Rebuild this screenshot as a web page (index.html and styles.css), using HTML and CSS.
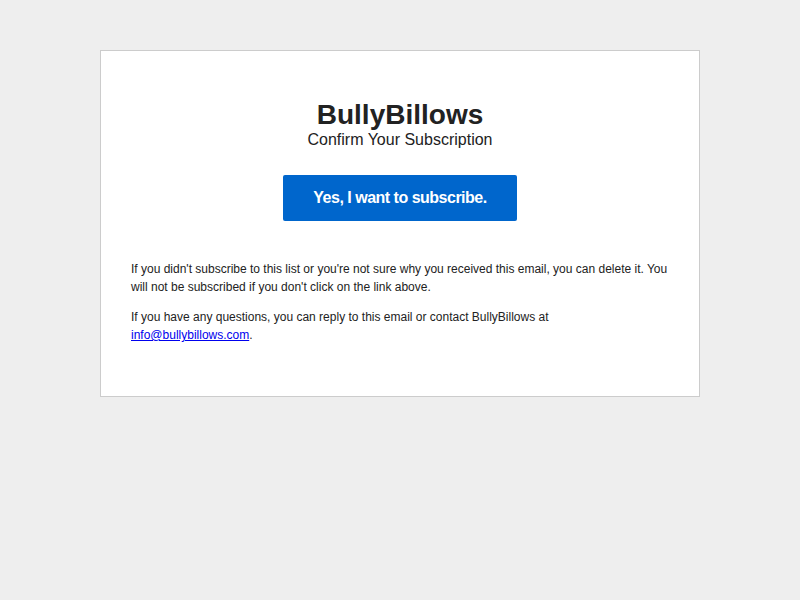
FILE: index.html
```html
<!DOCTYPE html>
<html>
<head>
<meta charset="utf-8">
<link rel="stylesheet" href="styles.css">
</head>
<body>
<div class="card">
  <div class="header">
    <h1 class="title">BullyBillows</h1>
    <div class="subtitle">Confirm Your Subscription</div>
  </div>
  <div class="action">
    <a class="button" href="#">Yes, I want to subscribe.</a>
  </div>
  <div class="content">
    <p>If you didn't subscribe to this list or you're not sure why you received this email, you can delete it. You will not be subscribed if you don't click on the link above.</p>
    <p>If you have any questions, you can reply to this email or contact BullyBillows at <a class="link" href="#">info@bullybillows.com</a>.</p>
  </div>
</div>
</body>
</html>
```

FILE: styles.css
```css
html, body {
  margin: 0;
  padding: 0;
  background: #eeeeee;
  font-family: "Liberation Sans", Arial, sans-serif;
  color: #222222;
}
body {
  padding-top: 50px;
}
.card {
  width: 598px;
  margin: 0 auto;
  background: #ffffff;
  border: 1px solid #cccccc;
  padding: 48px 0 52px;
}
.header {
  text-align: center;
}
.title {
  margin: 0;
  font-size: 28px;
  font-weight: bold;
  line-height: 32px;
  color: #222222;
}
.subtitle {
  font-size: 16px;
  line-height: 18px;
  color: #222222;
}
.action {
  display: flex;
  justify-content: center;
  margin-top: 26px;
}
.button {
  display: block;
  width: 234px;
  height: 46px;
  line-height: 45px;
  text-align: center;
  background: #0066cc;
  color: #ffffff;
  font-size: 16px;
  font-weight: bold;
  letter-spacing: -0.5px;
  text-decoration: none;
  border-radius: 2px;
}
.content {
  padding: 39px 30px 0;
  font-size: 12px;
  line-height: 18px;
}
.content p {
  margin: 0 0 12px;
}
.content p:last-child {
  margin-bottom: 0;
}
.link {
  color: #0000ee;
  text-decoration: underline;
}
```
